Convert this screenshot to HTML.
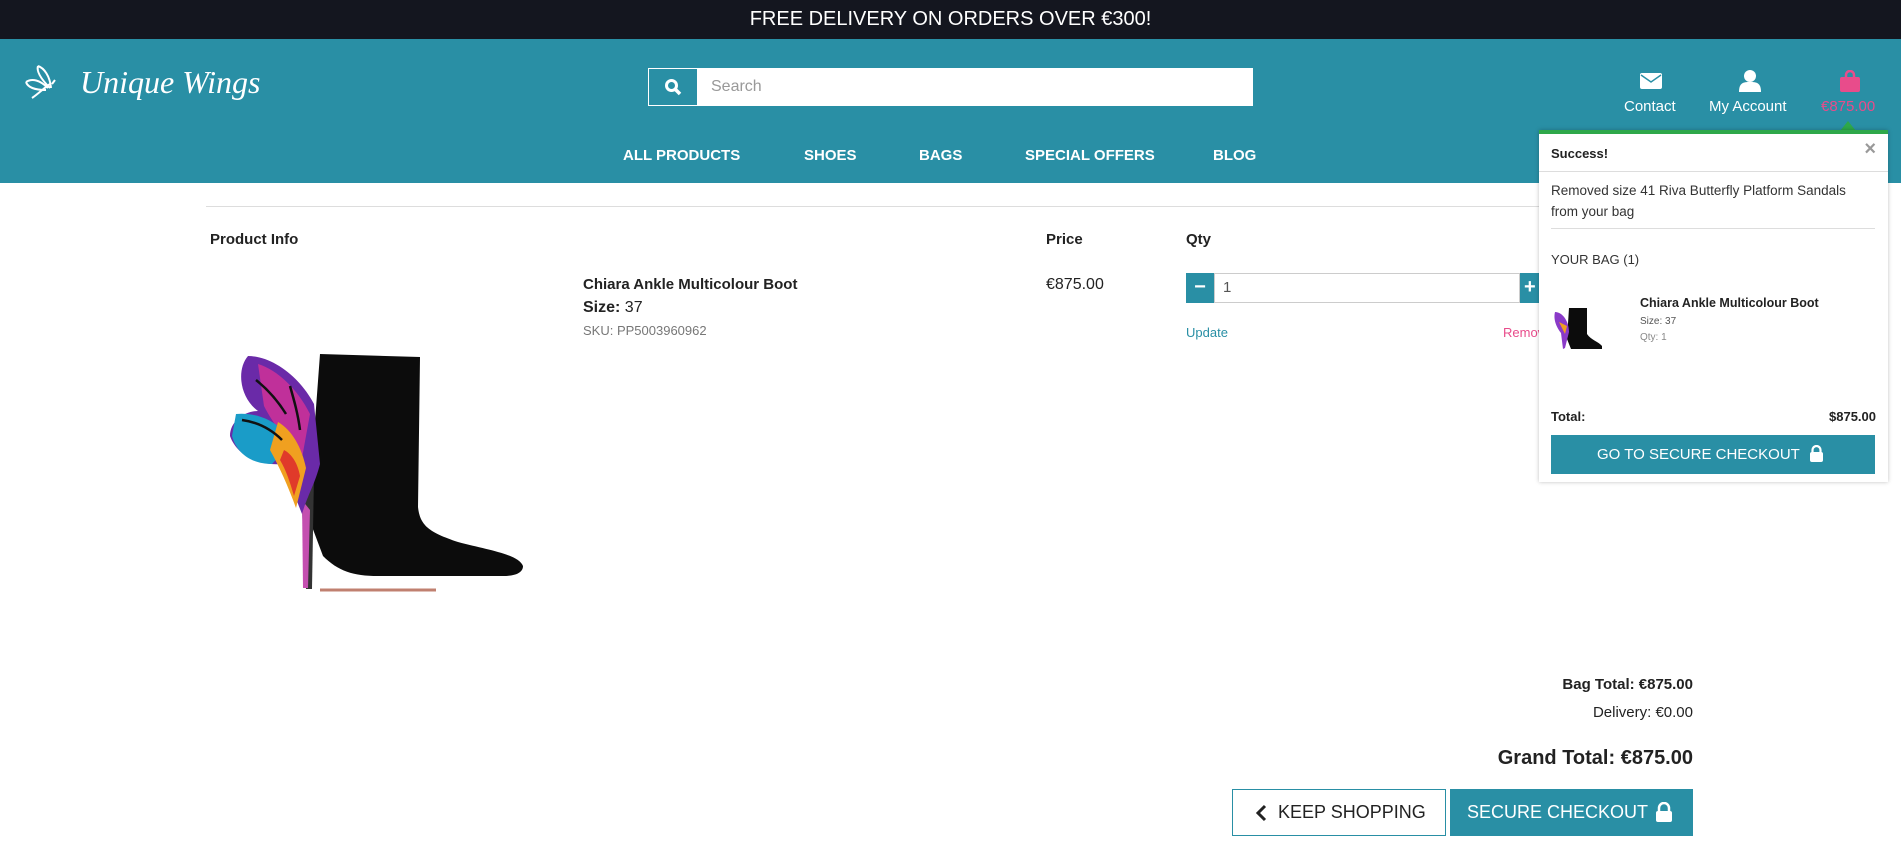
<!DOCTYPE html>
<html><head><meta charset="utf-8"><style>
*{box-sizing:border-box;margin:0;padding:0}
body{width:1901px;height:865px;overflow:hidden;background:#fff;font-family:"Liberation Sans",sans-serif;color:#222;position:relative}
.a{position:absolute;white-space:nowrap}
.top{left:0;top:0;width:1901px;height:39px;background:#14161f;color:#fff;font-size:20px;text-align:center;line-height:39px}
.hdr{left:0;top:39px;width:1901px;height:144px;background:#298fa5}
.nav{color:#fff;font-weight:bold;font-size:15px;top:147px}
.w{color:#fff}
.pop{left:1539px;top:130px;width:349px;height:352px;background:#fff;border-top:4px solid #2ea84a;box-shadow:0 0 4px rgba(0,0,0,.25)}
.teal{background:#298fa5}
</style></head><body>
<div class="a top">FREE DELIVERY ON ORDERS OVER €300!</div>
<div class="a hdr"></div>
<!-- logo -->
<svg class="a" style="left:24px;top:62px" width="34" height="40" viewBox="0 0 34 40"><path d="M14 4c6 2 12 10 13 22M14 4c-2 6 4 14 12 22M2 20c6-4 14-2 22 6M2 20c2 6 10 8 20 8M8 36c6-4 12-10 18-14M28 22l3-4" stroke="#fff" stroke-width="2" fill="none"/></svg>
<div class="a w" style="left:80px;top:64px;font-family:'Liberation Serif',serif;font-style:italic;font-size:32px">Unique Wings</div>
<!-- search -->
<div class="a" style="left:648px;top:68px;width:50px;height:38px;border:1px solid #fff"></div>
<svg class="a" style="left:664px;top:78px" width="18" height="18" viewBox="0 0 18 18"><circle cx="7.5" cy="7.5" r="5" stroke="#fff" stroke-width="3" fill="none"/><path d="M11 11l5 5" stroke="#fff" stroke-width="3.5"/></svg>
<div class="a" style="left:697px;top:68px;width:556px;height:38px;background:#fff;color:#999;font-size:16px;line-height:38px;padding-left:14px">Search</div>
<div class="a nav" style="left:623px">ALL PRODUCTS</div>
<div class="a nav" style="left:804px">SHOES</div>
<div class="a nav" style="left:919px">BAGS</div>
<div class="a nav" style="left:1025px">SPECIAL OFFERS</div>
<div class="a nav" style="left:1213px">BLOG</div>
<svg class="a" style="left:1640px;top:73px" width="22" height="16"><rect x="0" y="0" width="22" height="16" rx="2" fill="#fff"/><path d="M1 2l10 7 10-7" stroke="#298fa5" stroke-width="1.5" fill="none"/></svg>
<div class="a w" style="left:1624px;top:98px;font-size:15px">Contact</div>
<svg class="a" style="left:1739px;top:70px" width="22" height="22"><circle cx="11" cy="6" r="6" fill="#fff"/><path d="M0 22c0-9 4-10 11-10s11 1 11 10z" fill="#fff"/></svg>
<div class="a w" style="left:1709px;top:98px;font-size:15px">My Account</div>
<svg class="a" style="left:1840px;top:70px" width="20" height="22"><path d="M6 8V5a4 4 0 018 0v3" stroke="#e84c8b" stroke-width="2.5" fill="none"/><rect x="0" y="7" width="20" height="15" rx="2" fill="#e84c8b"/></svg>
<div class="a" style="left:1821px;top:98px;font-size:15px;color:#e84c8b">€875.00</div>
<!-- main -->
<div class="a" style="left:206px;top:206px;width:1340px;height:1px;background:#ddd"></div>
<div class="a" style="left:210px;top:231px;font-weight:bold;font-size:15px">Product Info</div>
<div class="a" style="left:1046px;top:231px;font-weight:bold;font-size:15px">Price</div>
<div class="a" style="left:1186px;top:231px;font-weight:bold;font-size:15px">Qty</div>
<div class="a" style="left:583px;top:276px;font-weight:bold;font-size:15px">Chiara Ankle Multicolour Boot</div>
<div class="a" style="left:583px;top:299px;font-size:16px"><b>Size:</b> 37</div>
<div class="a" style="left:583px;top:323px;font-size:13px;color:#777">SKU: PP5003960962</div>
<div class="a" style="left:1046px;top:276px;font-size:16px">€875.00</div>
<div class="a teal" style="left:1186px;top:273px;width:28px;height:30px;color:#fff;font-weight:bold;text-align:center;line-height:28px;font-size:20px">−</div>
<div class="a" style="left:1214px;top:273px;width:306px;height:30px;border:1px solid #ccc;font-size:15px;line-height:28px;padding-left:8px;color:#555">1</div>
<div class="a teal" style="left:1520px;top:273px;width:20px;height:30px;color:#fff;font-weight:bold;line-height:28px;font-size:20px;padding-left:4px">+</div>
<div class="a" style="left:1186px;top:325px;font-size:13px;color:#298fa5">Update</div>
<div class="a" style="left:1503px;top:325px;font-size:13px;color:#e84c8b">Remove</div>
<!-- boot -->
<svg class="a" style="left:228px;top:350px" width="310" height="255" viewBox="0 0 310 255">
<path d="M92 4l100 3-2 150c2 18 10 25 40 35 30 8 60 12 65 24 0 6-6 10-20 10H150c-25 0-40-5-55-20l-15-40z" fill="#0c0c0c"/>
<path d="M72 120l14 4-2 115h-6z" fill="#333"/>
<path d="M74 150l8 10-2 78h-5z" fill="#c44fb0"/>
<path d="M20 6c22 0 50 18 66 48l6 60c-5 20-12 30-18 50-8-20-14-40-20-50-22 2-45-8-52-28 0-15 15-25 28-25C12 48 8 20 20 6z" fill="#6a2aa8"/>
<path d="M30 14c20 6 40 26 52 50l-8 44c-12-14-28-32-38-52z" fill="#c0309a"/>
<path d="M8 64c22-2 44 8 56 28l-20 22c-20 0-35-10-40-28z" fill="#1a9cc8"/>
<path d="M50 72c14 8 24 26 28 46l-10 40c-8-22-16-40-26-58z" fill="#f0a020"/>
<path d="M56 100c8 4 14 14 16 26l-6 20c-4-14-8-26-14-36z" fill="#e03a2a"/>
<path d="M28 30c10 8 20 18 30 34M14 70c14 2 28 8 40 20M62 36c4 14 8 28 10 44" stroke="#111" stroke-width="2.5" fill="none"/>
<path d="M92 240h116" stroke="#c08070" stroke-width="3"/>
</svg>
<!-- totals -->
<div class="a" style="right:208px;top:676px;font-weight:bold;font-size:15px">Bag Total: €875.00</div>
<div class="a" style="right:208px;top:704px;font-size:15px">Delivery: €0.00</div>
<div class="a" style="right:208px;top:747px;font-weight:bold;font-size:20px">Grand Total: €875.00</div>
<div class="a" style="left:1232px;top:789px;width:214px;height:47px;border:1px solid #298fa5;font-size:18px;line-height:45px;padding-left:45px;color:#222">KEEP SHOPPING</div>
<svg class="a" style="left:1255px;top:804px" width="12" height="18"><path d="M10 2L3 9l7 7" stroke="#222" stroke-width="3" fill="none"/></svg>
<div class="a teal" style="left:1450px;top:789px;width:243px;height:47px;color:#fff;font-size:18px;line-height:47px;padding-left:17px">SECURE CHECKOUT</div>
<svg class="a" style="left:1655px;top:802px" width="18" height="20"><path d="M4 9V6a5 5 0 0110 0v3" stroke="#fff" stroke-width="2.5" fill="none"/><rect x="1" y="9" width="16" height="11" rx="2" fill="#fff"/></svg>
<!-- popup -->
<svg class="a" style="left:1840px;top:121px" width="16" height="10"><path d="M8 0L16 10H0z" fill="#2ea84a"/></svg>
<div class="a pop">
<div class="a" style="left:12px;top:12px;font-weight:bold;font-size:13px">Success!</div>
<div class="a" style="right:12px;top:4px;font-size:20px;color:#999;font-weight:bold">×</div>
<div class="a" style="left:0;top:37px;width:349px;height:1px;background:#ddd"></div>
<div class="a" style="left:12px;top:46px;font-size:13.5px;line-height:21px;color:#333;white-space:normal;width:318px">Removed size 41 Riva Butterfly Platform Sandals from your bag</div>
<div class="a" style="left:12px;top:94px;width:324px;height:1px;background:#ddd"></div>
<div class="a" style="left:12px;top:118px;font-size:13px;color:#333">YOUR BAG (1)</div>
<svg class="a" style="left:14px;top:172px" width="50" height="45" viewBox="0 0 50 45"><path d="M16 2h18v26c4 6 12 8 15 12v3H18l-4-10z" fill="#0c0c0c"/><path d="M2 6c8 0 14 10 14 20l-4 16-2 1-2-16C4 22 0 14 2 6z" fill="#8a3ac8"/><path d="M6 16l8 4-2 8z" fill="#f0a020"/></svg>
<div class="a" style="left:101px;top:162px;font-weight:bold;font-size:12.5px">Chiara Ankle Multicolour Boot</div>
<div class="a" style="left:101px;top:182px;font-size:10px;color:#555">Size: 37</div>
<div class="a" style="left:101px;top:198px;font-size:10px;color:#888">Qty: 1</div>
<div class="a" style="left:12px;top:275px;font-weight:bold;font-size:13px">Total:</div>
<div class="a" style="right:12px;top:275px;font-weight:bold;font-size:13px">$875.00</div>
<div class="a teal" style="left:12px;top:301px;width:324px;height:39px;color:#fff;font-size:15px;line-height:39px;padding-left:46px">GO TO SECURE CHECKOUT</div>
<svg class="a" style="left:270px;top:311px" width="15" height="17"><path d="M3.5 8V5a4 4 0 018 0v3" stroke="#fff" stroke-width="2.2" fill="none"/><rect x="1" y="7" width="13" height="10" rx="2" fill="#fff"/></svg>
</div>
</body></html>
